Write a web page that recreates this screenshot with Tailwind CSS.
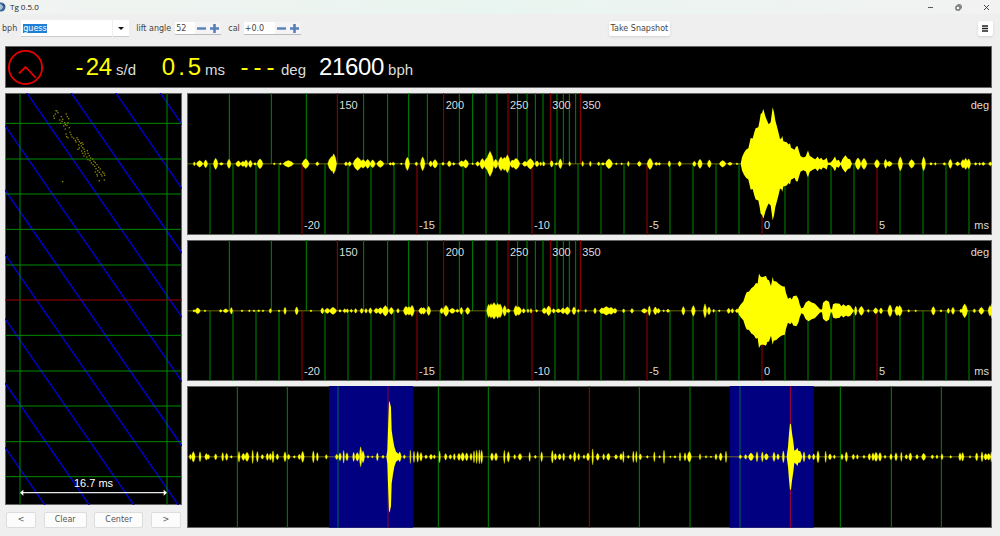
<!DOCTYPE html>
<html lang="en">
<head>
	<meta charset="UTF-8">
	<meta name="viewport" content="width=device-width, initial-scale=1.0">
	<title>Tg 0.5.0</title>
	<script src="https://cdn.jsdelivr.net/npm/@tailwindcss/browser@4"></script>
</head>
<body class="h-screen flex flex-col bg-[#efefef] text-[#444] font-['DejaVu_Sans',sans-serif] text-[8px] leading-none overflow-hidden">
	<header class="h-3.5 shrink-0 flex items-center justify-between pr-2.5 bg-linear-to-r from-[#f1f3f1] via-[#e9f5f0] to-[#f2f2f2]">
		<div class="flex items-center gap-1 text-[#222] font-['Open_Sans',sans-serif]">
			<svg class="w-1.5 h-2.5" viewBox="0 0 6 10">
				<circle cx="1" cy="5" r="4.5" fill="#3d6796" />
				<path d="M0 2l2 1 1 2-1 2-2 1z" fill="#a9c2d8" />
				<path d="M3 2l2 2" stroke="#1c3658" />
			</svg>
			<h1>Tg 0.5.0</h1>
		</div>
		<div class="flex items-center gap-[21px] text-[#333]">
			<button type="button" aria-label="Minimize"><svg class="w-[7px] h-[7px]" viewBox="0 0 7 7"><path d="M1 3.5h5" stroke="currentColor" stroke-width=".8" /></svg></button>
			<button type="button" aria-label="Restore"><svg class="w-[7px] h-[7px]" viewBox="0 0 7 7" fill="none" stroke="currentColor"><rect x="1" y="2" width="4" height="4" rx=".6" /><path d="M2.5 .8h2.7q1 0 1 1v2.7" stroke-width=".8" /></svg></button>
			<button type="button" aria-label="Close"><svg class="w-[7px] h-[7px]" viewBox="0 0 7 7"><path d="M1 1l5 5M6 1l-5 5" stroke="currentColor" stroke-width=".9" /></svg></button>
		</div>
	</header>

	<form class="h-8 shrink-0 flex items-center justify-between pl-0.5 pr-[7px] pb-[3px]">
		<div class="flex items-center gap-[7px]">
			<div class="flex items-center gap-1">
				<label for="bph">bph</label>
				<div class="flex h-[17px] gap-px">
					<input id="bph" type="text" value="guess" class="w-[91px] bg-white px-0.5 border-b border-[#ccc] outline-none selection:bg-[#1f7fd6] selection:text-white">
					<button type="button" aria-label="Choose bph" class="w-4 bg-white border-b border-[#ccc] flex items-center justify-center">
						<svg class="w-1.5 h-[3px]" viewBox="0 0 6 3"><path d="M0 0h6L3 3z" fill="#111" /></svg>
					</button>
				</div>
			</div>
			<div class="flex items-center gap-1">
				<label for="lift" class="whitespace-nowrap">lift angle</label>
				<div class="flex h-[13px] bg-white border-b border-[#bbb]">
					<input id="lift" type="text" value="52" class="w-5 px-px outline-none">
					<button type="button" aria-label="Decrease lift angle" class="w-[13px] bg-[#f4f4f4] flex items-center justify-center"><svg class="w-[9px] h-[9px]" viewBox="0 0 9 9"><path d="M0 4.5h9" stroke="#5580bb" stroke-width="2.4" /></svg></button>
					<button type="button" aria-label="Increase lift angle" class="w-[13px] bg-[#f4f4f4] flex items-center justify-center"><svg class="w-[9px] h-[9px]" viewBox="0 0 9 9"><path d="M0 4.5h9M4.5 0v9" stroke="#5580bb" stroke-width="2.6" /></svg></button>
				</div>
			</div>
			<div class="flex items-center gap-1">
				<label for="cal">cal</label>
				<div class="flex h-[13px] bg-white border-b border-[#bbb]">
					<input id="cal" type="text" value="+0.0" class="w-[31px] px-px outline-none">
					<button type="button" aria-label="Decrease cal" class="w-[13px] bg-[#f4f4f4] flex items-center justify-center"><svg class="w-[9px] h-[9px]" viewBox="0 0 9 9"><path d="M0 4.5h9" stroke="#5580bb" stroke-width="2.4" /></svg></button>
					<button type="button" aria-label="Increase cal" class="w-[13px] bg-[#f4f4f4] flex items-center justify-center"><svg class="w-[9px] h-[9px]" viewBox="0 0 9 9"><path d="M0 4.5h9M4.5 0v9" stroke="#5580bb" stroke-width="2.6" /></svg></button>
				</div>
			</div>
		</div>
		<button type="button" class="h-[15px] px-0.5 bg-white rounded-xs shadow-sm">Take Snapshot</button>
		<button type="button" aria-label="Menu" class="size-[15px] bg-white rounded-xs shadow-sm flex items-center justify-center">
			<svg class="w-1.5 h-[7px]" viewBox="0 0 6 7"><path d="M0 1h6M0 3.5h6M0 6h6" stroke="#222" stroke-width="1.4" /></svg>
		</button>
	</form>

	<section class="h-[42px] shrink-0 ml-[5px] mr-2 pl-[3px] flex items-center bg-black text-[#ddd] font-['Liberation_Sans',sans-serif] outline -outline-offset-1 outline-[#666]">
		<svg class="size-[35px]" viewBox="0 0 35 35" fill="none" stroke="#e80000" stroke-width="1.8">
			<circle cx="17.5" cy="17.5" r="16.6" />
			<path d="M11 23.500l6.500-6.500L28 28" />
		</svg>
		<dl class="pl-[30px] flex gap-[13px]">
			<div class="flex items-baseline gap-1"><dd class="flex text-2xl text-[#ff0]" data-cells="-24"></dd><dt class="text-[15px]">s/d</dt></div>
			<div class="pl-[13px] flex items-baseline gap-1"><dd class="flex text-2xl text-[#ff0]" data-cells="0.5"></dd><dt class="text-[15px]">ms</dt></div>
			<div class="flex items-baseline gap-1"><dd class="flex text-2xl text-[#ff0]" data-cells="---"></dd><dt class="text-[15px]">deg</dt></div>
			<div class="flex items-baseline gap-1"><dd class="flex text-2xl text-white" data-cells="21600"></dd><dt class="text-[15px]">bph</dt></div>
		</dl>
	</section>

	<main class="flex-1 min-h-0 flex gap-[5px] pt-[5px] pb-2 pl-[5px] pr-2">
		<aside class="w-[177px] shrink-0 flex flex-col gap-[7px]">
			<div class="relative flex-1 min-h-0 bg-black outline -outline-offset-1 outline-[#666]">
				<svg id="paper" class="absolute inset-0 size-full" viewBox="0 0 531 1236" preserveAspectRatio="none"></svg>
				<p class="absolute bottom-4 inset-x-0 text-center text-[11px] text-white font-['Liberation_Sans',sans-serif]">16.7 ms</p>
			</div>
			<div class="flex justify-between px-px">
				<button type="button" class="w-[30px] h-4 bg-[#fcfcfc] border border-[#ddd] rounded-xs text-[#555]">&lt;</button>
				<button type="button" class="w-[43px] h-4 bg-[#fcfcfc] border border-[#ddd] rounded-xs text-[#555]">Clear</button>
				<button type="button" class="w-[49px] h-4 bg-[#fcfcfc] border border-[#ddd] rounded-xs text-[#555]">Center</button>
				<button type="button" class="w-[30px] h-4 bg-[#fcfcfc] border border-[#ddd] rounded-xs text-[#555]">&gt;</button>
			</div>
		</aside>
		<div class="flex-1 min-w-0 flex flex-col gap-[5px] text-[11px] text-[#ddd] font-['Liberation_Sans',sans-serif]">
			<section id="tic" class="relative flex-1 min-h-0 bg-black outline -outline-offset-1 outline-[#666]">
				<svg class="absolute inset-0 size-full" viewBox="0 0 2415 426" preserveAspectRatio="none"></svg>
				<span class="absolute right-[3px] top-[7px]">deg</span>
				<span class="absolute right-[3px] bottom-1">ms</span>
			</section>
			<section id="toc" class="relative flex-1 min-h-0 bg-black outline -outline-offset-1 outline-[#666]">
				<svg class="absolute inset-0 size-full" viewBox="0 0 2415 426" preserveAspectRatio="none"></svg>
				<span class="absolute right-[3px] top-[7px]">deg</span>
				<span class="absolute right-[3px] bottom-1">ms</span>
			</section>
			<section id="period" class="relative flex-1 min-h-0 bg-black outline -outline-offset-1 outline-[#666]">
				<svg class="absolute inset-0 size-full" viewBox="0 0 2415 426" preserveAspectRatio="none"></svg>
			</section>
		</div>
	</main>

	<script>
		const GREEN = '#008a00', RED = '#a00000', YELLOW = '#ffff00';
		const WIDTH = 2415, HEIGHT = 426, MID = 213;

		// readout digits sit in cells of equal width
		document.querySelectorAll('[data-cells]').forEach(el => {
			el.innerHTML = [...el.dataset.cells].map(c => `<span class="w-[13px] flex justify-center">${c}</span>`).join('');
		});

		function line(x1, y1, x2, y2, color, width = 3) {
			return `<path d="M${x1} ${y1}L${x2} ${y2}" stroke="${color}" stroke-width="${width}" fill="none"/>`;
		}

		// bursts: [x, half width, amplitude]
		function bursts(list, spread = 1) {
			let d = '';
			for (const [x, half, a] of list) {
				const w = half * spread, u = w * 0.6, b = a * 0.6;
				d += `M${x - w} ${MID}L${x - u} ${MID - b}L${x} ${MID - a}L${x + u} ${MID - b}L${x + w} ${MID}L${x + u} ${MID + b}L${x} ${MID + a}L${x - u} ${MID + b}Z`;
			}
			return `<path d="${d}" fill="${YELLOW}" stroke="${YELLOW}" stroke-width="1"/>`;
		}

		// envelope: [x, amplitude], mirrored around the middle
		function envelope(list) {
			const up = list.map(([x, a]) => `${x},${MID - a}`);
			const down = list.map(([x, a]) => `${x},${MID + a}`).reverse();
			return `<polygon points="${up.concat(down).join(' ')}" fill="${YELLOW}"/>`;
		}

		const base = line(0, MID, WIDTH, MID, '#a0a000', 2);

		const degTicks = [127, 253, 358, 451, 530, 602, 665, 721, 770, 817, 857, 897, 930, 963, 992, 1020, 1045, 1068, 1090, 1110, 1129, 1147, 1166, 1180];
		const degLabels = { 451: 150, 770: 200, 963: 250, 1090: 300, 1180: 350 };

		function beatGrid(section) {
			let out = '';
			for (const x of degTicks) {
				out += line(x, 0, x, MID, degLabels[x] ? RED : GREEN);
				if (degLabels[x]) label(section, x, degLabels[x], 'absolute top-[7px] pl-0.5');
			}
			for (let ms = -24; ms <= 9; ms++) {
				const x = 1725 + ms * 69;
				out += line(x, MID, x, HEIGHT, ms % 5 ? GREEN : RED);
				if (ms % 5 === 0) label(section, x, ms, 'absolute bottom-1 pl-0.5');
			}
			return out;
		}

		function label(section, x, text, cls) {
			const span = document.createElement('span');
			span.className = cls;
			span.style.left = x / WIDTH * 100 + '%';
			span.textContent = text;
			section.append(span);
		}

		const tic = document.getElementById('tic');
		tic.querySelector('svg').innerHTML = beatGrid(tic) + base + bursts([
			[22, 3, 6], [38, 10, 10], [56, 6, 12], [86, 7, 17], [103, 6, 4], [126, 6, 14], [154, 8, 9], [168, 7, 8], [177, 6, 12], [190, 6, 11], [204, 4, 4], [219, 9, 15],
			[262, 3, 3], [280, 3, 3], [304, 16, 10], [356, 11, 15], [391, 5, 6], [434, 12, 22], [440, 9, 30], [477, 5, 6], [488, 5, 7], [512, 14, 20], [528, 10, 13], [542, 8, 14], [557, 8, 12], [580, 11, 11],
			[610, 4, 4], [619, 5, 5], [643, 3, 3], [661, 7, 20], [688, 4, 6], [707, 7, 21], [731, 5, 9], [744, 8, 13], [768, 4, 5], [787, 6, 9], [800, 4, 4], [824, 9, 9],
			[836, 9, 13], [857, 3, 3], [872, 6, 7], [886, 8, 16], [900, 10, 18], [909, 12, 38], [926, 7, 14], [942, 9, 21], [952, 10, 20], [961, 9, 27], [976, 7, 12], [987, 12, 17], [1014, 8, 8], [1030, 12, 16], [1050, 6, 9], [1061, 3, 6], [1070, 4, 7],
			[1094, 5, 10], [1108, 4, 4], [1120, 6, 15], [1148, 3, 7], [1187, 3, 8], [1210, 3, 8], [1235, 4, 6], [1248, 5, 4], [1266, 11, 15], [1288, 3, 3], [1304, 3, 3], [1324, 3, 8], [1357, 6, 8],
			[1389, 9, 17], [1408, 5, 5], [1417, 4, 4], [1447, 4, 9], [1478, 5, 8], [1522, 5, 8], [1539, 7, 14], [1567, 6, 12], [1607, 10, 10], [1629, 7, 5], [1650, 3, 3],
			[2013, 9, 18], [2031, 9, 17], [2070, 8, 13], [2096, 5, 14], [2107, 9, 8], [2140, 7, 21], [2174, 9, 13], [2210, 6, 21], [2232, 4, 4], [2245, 3, 4], [2272, 4, 4], [2290, 6, 14],
			[2312, 7, 6], [2328, 7, 13], [2336, 7, 17], [2345, 6, 15], [2366, 4, 4], [2378, 3, 4], [2389, 5, 5], [2410, 5, 6]
		]) + envelope([
			[1661, 0], [1665, 20], [1671, 33], [1677, 42], [1684, 47], [1687, 60], [1691, 78], [1697, 76], [1702, 95], [1706, 107], [1714, 110], [1718, 130], [1721, 150], [1725, 153], [1729, 165], [1735, 143], [1740, 130], [1745, 119],
			[1751, 125], [1757, 170], [1761, 155], [1765, 130], [1771, 108], [1775, 92], [1779, 75], [1783, 76], [1786, 84], [1789, 68], [1799, 65], [1805, 58], [1809, 62], [1812, 48], [1823, 42], [1827, 52], [1832, 53], [1836, 38], [1841, 23],
			[1849, 19], [1856, 22], [1863, 40], [1868, 24], [1879, 17], [1885, 14], [1892, 22], [1897, 14], [1903, 18], [1908, 11], [1915, 14], [1919, 18], [1923, 3], [1931, 4], [1938, 12], [1944, 22], [1949, 9], [1955, 12], [1961, 2],
			[1966, 14], [1975, 26], [1983, 15], [1989, 14], [1995, 0]
		]);

		const toc = document.getElementById('toc');
		toc.querySelector('svg').innerHTML = beatGrid(toc) + base + bursts([
			[21, 3, 4], [32, 8, 9], [54, 3, 3], [101, 4, 4], [116, 8, 6], [133, 4, 10], [165, 3, 3], [187, 3, 3], [201, 3, 3], [215, 4, 3], [228, 3, 3], [250, 4, 7], [276, 3, 3], [294, 4, 11], [329, 5, 12], [372, 3, 3],
			[406, 5, 9], [421, 8, 8], [438, 11, 11], [459, 4, 4], [473, 5, 6], [481, 4, 6], [493, 4, 5], [506, 4, 7], [524, 5, 8], [537, 4, 7], [550, 5, 9], [568, 7, 8], [580, 8, 10], [595, 10, 16], [613, 7, 11], [633, 4, 7],
			[657, 8, 14], [666, 8, 13], [675, 7, 17], [703, 8, 10], [710, 7, 10], [725, 6, 14], [764, 5, 9], [777, 9, 17], [796, 9, 8], [811, 5, 5], [823, 5, 11], [842, 7, 11], [905, 6, 20], [912, 8, 22], [921, 11, 25], [932, 9, 23], [939, 8, 21], [953, 6, 16], [964, 6, 6],
			[987, 7, 16], [995, 9, 13], [1010, 5, 7], [1023, 3, 6], [1032, 3, 7], [1049, 3, 4], [1072, 7, 9], [1085, 8, 15], [1100, 5, 7], [1114, 8, 6], [1128, 7, 9], [1141, 9, 12], [1161, 6, 12], [1174, 3, 5], [1196, 3, 5],
			[1224, 4, 9], [1245, 8, 9], [1258, 14, 13], [1272, 10, 11], [1284, 6, 8], [1310, 4, 6], [1335, 5, 7], [1372, 9, 7], [1387, 4, 15], [1405, 6, 12], [1414, 6, 7], [1430, 3, 3], [1443, 5, 5], [1489, 5, 13], [1519, 6, 16], [1554, 5, 21], [1566, 5, 12], [1580, 3, 5], [1597, 3, 3],
			[1625, 5, 8], [1636, 4, 7], [1650, 5, 6], [2006, 4, 14], [2023, 8, 14], [2044, 3, 5], [2066, 7, 9], [2082, 5, 9], [2109, 7, 18], [2130, 7, 15], [2138, 8, 16], [2165, 3, 4], [2186, 3, 3], [2239, 6, 13], [2262, 3, 4], [2284, 4, 8], [2298, 5, 11],
			[2322, 4, 6], [2333, 9, 21], [2362, 4, 6], [2383, 8, 11], [2409, 6, 16], [2414, 3, 22]
		]) + envelope([
			[1652, 0], [1655, 10], [1661, 19], [1669, 28], [1675, 47], [1679, 56], [1686, 58], [1693, 68], [1700, 73], [1707, 84], [1712, 82], [1716, 112], [1720, 104], [1725, 101], [1732, 103], [1737, 105], [1741, 94], [1746, 92], [1752, 75], [1757, 102], [1760, 90],
			[1768, 88], [1774, 82], [1782, 76], [1788, 73], [1793, 73], [1797, 54], [1803, 36], [1810, 40], [1814, 34], [1819, 44], [1828, 46], [1834, 36], [1838, 20], [1843, 7], [1849, 10], [1856, 25], [1865, 31], [1874, 25], [1883, 22], [1891, 14], [1899, 5], [1905, 4],
			[1908, 24], [1917, 32], [1926, 27], [1931, 5], [1935, 5], [1938, 20], [1945, 23], [1958, 21], [1963, 14], [1969, 20], [1977, 14], [1983, 18], [1990, 15], [1995, 8], [2001, 0]
		]);

		const period = document.getElementById('period');
		let grid = '';
		for (const x of [426, 1628]) grid += `<rect x="${x}" y="0" width="252" height="${HEIGHT}" fill="#000080"/>`;
		for (const x of [151, 301, 754, 904, 1057, 1357, 1509, 1960, 2113, 2263]) grid += line(x, 0, x, HEIGHT, GREEN);
		for (const x of [453, 1659]) grid += line(x, 0, x, HEIGHT, '#006a50');
		grid += line(603, 0, 603, HEIGHT, '#8a0040') + line(1207, 0, 1207, HEIGHT, RED) + line(1810, 0, 1810, HEIGHT, '#b00030');
		period.querySelector('svg').innerHTML = grid + base + bursts([
			[10, 4, 8], [19, 7, 16], [39, 4, 15], [58, 6, 10], [64, 5, 7], [86, 5, 9], [107, 4, 13], [119, 5, 11], [133, 4, 4], [156, 4, 16], [169, 7, 11], [180, 8, 14], [197, 3, 20], [211, 4, 16], [226, 5, 7], [241, 5, 11], [250, 5, 10], [258, 4, 18], [271, 5, 9], [294, 5, 15], [305, 5, 8],
			[322, 4, 4], [337, 5, 8], [347, 6, 17], [379, 4, 18], [391, 4, 13], [418, 4, 7], [449, 5, 8], [459, 5, 12], [470, 3, 19], [480, 5, 12], [500, 4, 14], [511, 7, 13], [521, 5, 30], [528, 6, 18], [543, 3, 4], [556, 3, 3], [571, 4, 12], [588, 4, 5],
			[638, 6, 15], [652, 4, 6], [670, 2, 20], [681, 3, 17], [692, 4, 16], [702, 5, 13], [717, 5, 6], [732, 6, 8], [742, 4, 6], [758, 3, 18], [776, 5, 10], [790, 5, 7], [802, 4, 10], [816, 6, 11], [827, 7, 13], [839, 6, 12], [852, 4, 11], [861, 3, 18], [869, 3, 20], [877, 3, 21], [884, 4, 20],
			[915, 6, 12], [927, 6, 12], [952, 3, 20], [964, 5, 16], [983, 4, 7], [999, 7, 10], [1028, 3, 14], [1045, 4, 5], [1064, 4, 15], [1096, 4, 19], [1105, 5, 10], [1118, 6, 9], [1130, 4, 12], [1150, 5, 8], [1163, 5, 15], [1175, 4, 10], [1191, 4, 6], [1203, 6, 12], [1217, 3, 24],
			[1232, 6, 11], [1250, 4, 9], [1264, 7, 11], [1287, 6, 7], [1302, 5, 10], [1309, 3, 17], [1324, 4, 5], [1339, 3, 17], [1348, 3, 17], [1360, 5, 9], [1381, 4, 4], [1402, 3, 15], [1418, 3, 4], [1431, 3, 20], [1450, 3, 3], [1464, 4, 4], [1479, 3, 13], [1494, 4, 12], [1507, 8, 16],
			[1539, 3, 9], [1557, 3, 4], [1572, 3, 3], [1587, 4, 9], [1601, 6, 12], [1617, 3, 17], [1660, 5, 6], [1676, 5, 7], [1692, 10, 12], [1710, 4, 15], [1726, 4, 15], [1738, 8, 10], [1761, 5, 14], [1773, 5, 9], [1789, 4, 18], [1851, 4, 15], [1867, 5, 8], [1880, 5, 9], [1893, 5, 18],
			[1916, 3, 17], [1929, 6, 9], [1942, 4, 6], [1965, 4, 9], [1978, 5, 15], [1999, 5, 8], [2011, 4, 7], [2031, 4, 5], [2047, 5, 10], [2058, 5, 12], [2067, 7, 14], [2079, 6, 13], [2094, 4, 5], [2112, 5, 9], [2127, 5, 12], [2143, 3, 14], [2158, 5, 7], [2170, 6, 12], [2190, 5, 7], [2210, 8, 11],
			[2236, 5, 6], [2250, 4, 6], [2265, 4, 9], [2291, 4, 4], [2319, 5, 12], [2327, 5, 13], [2349, 3, 4], [2369, 5, 12], [2385, 4, 15], [2396, 7, 10], [2405, 7, 10], [2413, 3, 15]
		], 0.8) + envelope([
			[598, 0], [601, 20], [602, 50], [604, 110], [606, 168], [609, 162], [612, 148], [614, 80], [618, 52], [622, 30], [627, 15], [636, 8], [643, 0]
		]) + envelope([
			[1799, 0], [1803, 30], [1806, 70], [1809, 100], [1812, 98], [1815, 72], [1819, 45], [1822, 18], [1828, 22], [1831, 28], [1834, 18], [1840, 17], [1846, 0]
		]);

		// paper strip
		let strip = '';
		for (let y0 = 98 - 193 * 4; y0 < 1236; y0 += 193) strip += line(0, y0, 531, y0 + 768, '#0000d8', 4);
		for (const x of [45, 486]) strip += line(x, 0, x, 1236, GREEN);
		for (const y of [91, 198, 303, 409, 516, 727, 834, 939, 1046, 1151]) strip += line(0, y, 531, y, GREEN);
		strip += line(0, 621, 531, 621, RED);
		const dots = [
			[152, 52], [145, 68], [147, 75], [150, 62], [158, 58], [155, 53], [183, 62], [186, 70], [190, 76], [168, 70], [163, 80], [170, 84], [172, 78], [166, 90], [178, 88], [180, 94], [185, 96], [188, 88], [175, 98], [192, 103], [180, 107],
			[182, 122], [184, 130], [194, 117], [197, 124], [188, 133], [200, 131], [205, 135], [210, 141], [215, 133], [218, 139], [212, 146], [222, 145], [226, 150], [220, 155], [230, 148], [228, 158], [218, 168], [233, 153], [222, 164], [232, 163],
			[236, 168], [229, 173], [238, 175], [232, 180], [240, 182], [246, 172], [248, 180], [236, 188], [244, 191], [252, 187], [256, 194], [248, 199], [254, 202], [262, 197], [266, 204], [258, 209], [263, 214], [270, 208], [268, 219], [275, 214],
			[280, 222], [272, 226], [277, 232], [285, 227], [270, 236], [282, 237], [287, 243], [275, 243], [292, 236], [296, 240], [290, 248], [298, 246], [276, 248], [282, 262], [297, 260], [172, 265]
		];
		for (const [x, y] of dots) strip += `<rect x="${x - 1}" y="${y - 1}" width="4" height="4" fill="#8a8400"/>`;
		strip += line(48, 1199, 483, 1199, '#e8e8e8', 4) + '<path d="M45 1199l10-9v18zM486 1199l-10-9v18z" fill="#fff"/>';
		document.getElementById('paper').innerHTML = strip;

		document.getElementById('bph').select();
	</script>
</body>
</html>
